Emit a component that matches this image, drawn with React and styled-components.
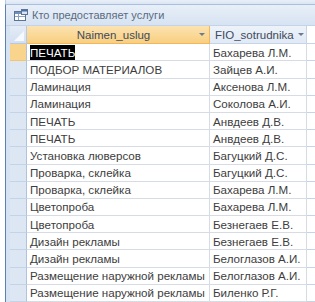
import React from "react";
import styled, { createGlobalStyle } from "styled-components";

const GlobalStyle = createGlobalStyle`
  html, body { margin: 0; padding: 0; background: #fff; }
  body { font-family: "Liberation Sans", Arial, sans-serif; }
`;

const Page = styled.div`
  width: 315px;
  height: 302px;
  overflow: hidden;
  background: #fff;
  display: flex;
  flex-direction: column;
`;

const TopStrip = styled.div`
  height: 7px;
  background: linear-gradient(#e9f0f9, #dae5f3);
  margin-left: 5px;
  border-left: 1px solid #b9cbe4;
`;

const Frame = styled.div`
  flex: 1;
  display: flex;
  flex-direction: column;
  margin-left: 5px;
  border-left: 1px solid #5e7fb1;
  border-top: 1px solid #a8bfdf;
  background: #d6e3f3;
`;

const TitleBar = styled.div`
  height: 20px;
  display: flex;
  align-items: center;
  gap: 4px;
  padding-left: 8px;
  background: linear-gradient(#e8eff8, #d7e3f2);
  color: #5a6b82;
  font-size: 11px;
  border-bottom: 1px solid #c3d3e9;
`;

const Body = styled.div`
  flex: 1;
  display: flex;
`;

const Gutter = styled.div`
  width: 4px;
  background: #d6e3f3;
`;

const Grid = styled.div`
  display: grid;
  grid-template-columns: 17px 183px 97px 1fr;
  grid-template-rows: 18px;
  grid-auto-rows: 17.2px;
  flex: 1;
  background: #fff;
  align-content: start;
`;

const Corner = styled.div`
  position: relative;
  background: linear-gradient(#e4ecf7, #d3e0f1);
  border-right: 1px solid #b7c9e2;
  border-bottom: 1px solid #b7c9e2;
  &::after {
    content: "";
    position: absolute;
    right: 2px;
    bottom: 2px;
    border-left: 10px solid transparent;
    border-bottom: 10px solid #f6f9fd;
  }
`;

const Head = styled.div`
  display: flex;
  align-items: center;
  padding: 0 4px 0 5px;
  font-size: 11.5px;
  color: #3f4a5a;
  border-right: 1px solid ${(p) => (p.$active ? "#f1b75a" : "#c5d4e8")};
  border-bottom: 1px solid ${(p) => (p.$active ? "#f1b75a" : "#c5d4e8")};
  background: ${(p) =>
    p.$active
      ? "linear-gradient(#fce3b2, #f8cf80)"
      : "linear-gradient(#eef3fa, #e0e9f5)"};
`;

const HeadLabel = styled.span`
  flex: 1;
  text-align: ${(p) => (p.$center ? "center" : "left")};
`;

const Arrow = styled.span`
  width: 0;
  height: 0;
  border-left: 3px solid transparent;
  border-right: 3px solid transparent;
  border-top: 3px solid #6b7a8e;
  margin-left: 4px;
`;

const Filler = styled.div`
  border-bottom: 1px solid #c5d4e8;
  background: #fff;
`;

const Selector = styled.div`
  background: ${(p) => (p.$active ? "#f9d48c" : "#dde7f4")};
  border-right: 1px solid #aec3df;
  border-bottom: 1px solid ${(p) => (p.$active ? "#f3c56f" : "#c3d3e8")};
`;

const Cell = styled.div`
  display: flex;
  align-items: center;
  padding-left: 3px;
  font-size: 11.6px;
  color: #3d3d3d;
  white-space: nowrap;
  overflow: hidden;
  border-right: 1px solid #d5dce6;
  border-bottom: 1px solid #d5dce6;
`;

const Picked = styled.span`
  background: #000;
  color: #fff;
  padding: 1px 0;
`;

const rows = [
  ["ПЕЧАТЬ", "Бахарева Л.М."],
  ["ПОДБОР МАТЕРИАЛОВ", "Зайцев А.И."],
  ["Ламинация", "Аксенова Л.М."],
  ["Ламинация", "Соколова А.И."],
  ["ПЕЧАТЬ", "Анвдеев Д.В."],
  ["ПЕЧАТЬ", "Анвдеев Д.В."],
  ["Установка люверсов", "Багуцкий Д.С."],
  ["Проварка, склейка", "Багуцкий Д.С."],
  ["Проварка, склейка", "Бахарева Л.М."],
  ["Цветопроба", "Бахарева Л.М."],
  ["Цветопроба", "Безнегаев Е.В."],
  ["Дизайн рекламы", "Безнегаев Е.В."],
  ["Дизайн рекламы", "Белоглазов А.И."],
  ["Размещение наружной рекламы", "Белоглазов А.И."],
  ["Размещение наружной рекламы", "Биленко Р.Г."],
];

function TableIcon() {
  return (
    <svg width="14" height="12" viewBox="0 0 14 12">
      <rect x="0.5" y="2.5" width="11" height="9" fill="#fff" stroke="#5d7396" />
      <rect x="1" y="3" width="10" height="2" fill="#6f8fc0" />
      <line x1="1" y1="7.5" x2="11" y2="7.5" stroke="#8da3c4" />
      <line x1="4.5" y1="5" x2="4.5" y2="11" stroke="#8da3c4" />
      <rect x="7.5" y="0.5" width="6" height="5" fill="#d9e4f3" stroke="#5d7396" />
      <rect x="8" y="1" width="5" height="1.5" fill="#4b6fa8" />
    </svg>
  );
}

export default function App() {
  return (
    <Page>
      <GlobalStyle />
      <TopStrip />
      <Frame>
        <TitleBar>
          <TableIcon />
          <span>Кто предоставляет услуги</span>
        </TitleBar>
        <Body>
          <Gutter />
          <Grid>
            <Corner />
            <Head $active>
              <HeadLabel $center>Naimen_uslug</HeadLabel>
              <Arrow />
            </Head>
            <Head>
              <HeadLabel>FIO_sotrudnika</HeadLabel>
              <Arrow />
            </Head>
            <Filler />
            {rows.map(([service, person], i) => (
              <React.Fragment key={i}>
                <Selector $active={i === 0} />
                <Cell>{i === 0 ? <Picked>{service}</Picked> : service}</Cell>
                <Cell>{person}</Cell>
                <Filler />
              </React.Fragment>
            ))}
          </Grid>
        </Body>
      </Frame>
    </Page>
  );
}
